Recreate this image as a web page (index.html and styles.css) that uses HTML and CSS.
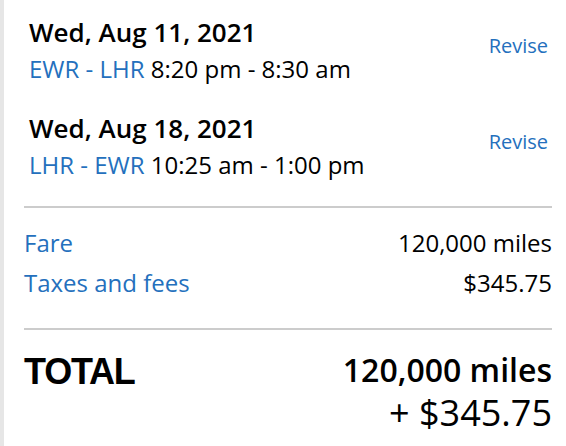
FILE: index.html
```html
<!DOCTYPE html>
<html>
<head>
<meta charset="utf-8">
<link rel="stylesheet" href="styles.css">
</head>
<body>
<div class="panel">
  <div class="flights">
    <div class="flight">
      <div class="flight-info">
        <div class="date">Wed, Aug 11, 2021</div>
        <div class="route"><span class="link">EWR - LHR</span> 8:20 pm - 8:30 am</div>
      </div>
      <a class="revise">Revise</a>
    </div>
    <div class="flight">
      <div class="flight-info">
        <div class="date">Wed, Aug 18, 2021</div>
        <div class="route"><span class="link">LHR - EWR</span> 10:25 am - 1:00 pm</div>
      </div>
      <a class="revise">Revise</a>
    </div>
  </div>
  <div class="costs">
    <div class="cost-row"><span class="link">Fare</span><span>120,000 miles</span></div>
    <div class="cost-row"><span class="link">Taxes and fees</span><span>$345.75</span></div>
  </div>
  <div class="total">
    <div class="total-label">TOTAL</div>
    <div class="total-value">
      <div class="total-miles">120,000 miles</div>
      <div class="total-cash">+ $345.75</div>
    </div>
  </div>
</div>
</body>
</html>
```

FILE: styles.css
```css
html, body {
  margin: 0;
  padding: 0;
  background: #fff;
}
body {
  font-family: "Open Sans", sans-serif;
  color: #000;
  border-left: 4px solid #e6e6e6;
  min-height: 446px;
  box-sizing: border-box;
  overflow: hidden;
}
.panel {
  padding: 0 14px 0 20px;
}
.link {
  color: #2470bd;
}
.flights {
  padding: 14px 0 22px 5px;
  border-bottom: 2px solid #cccccc;
  display: flex;
  flex-direction: column;
  gap: 22px;
}
.flight {
  display: flex;
  justify-content: space-between;
  align-items: flex-start;
}
.date {
  font-size: 26px;
  font-weight: 600;
  line-height: 36px;
}
.route {
  font-size: 24px;
  line-height: 38px;
}
.revise {
  color: #2470bd;
  font-size: 20px;
  line-height: 28px;
  margin-top: 18px;
  margin-right: 4px;
}
.costs {
  padding: 15px 0 25px;
  border-bottom: 2px solid #cccccc;
}
.cost-row {
  display: flex;
  justify-content: space-between;
  font-size: 24px;
  line-height: 40px;
}
.total {
  display: flex;
  justify-content: space-between;
  align-items: flex-start;
  padding-top: 20px;
}
.total-label {
  font-family: "Liberation Sans", Arial, sans-serif;
  font-weight: 700;
  font-size: 36px;
  letter-spacing: -1.2px;
  line-height: 44px;
}
.total-value {
  text-align: right;
}
.total-miles {
  font-size: 32px;
  font-weight: 600;
  line-height: 40px;
}
.total-cash {
  font-size: 36px;
  line-height: 46px;
}
```
